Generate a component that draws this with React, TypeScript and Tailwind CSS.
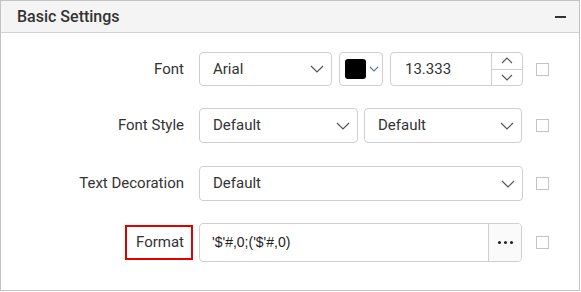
import React from "react";

const Chevron = ({ className = "" }: { className?: string }) => (
  <svg width="14" height="8" viewBox="0 0 14 8" className={className} fill="none">
    <path d="M1 1 L7 7 L13 1" stroke="#555" strokeWidth="1.2" />
  </svg>
);

const Checkbox = () => (
  <div className="w-[13px] h-[13px] border border-[#c4c4c4] bg-white shrink-0" />
);

const Dropdown = ({ value, className = "" }: { value: string; className?: string }) => (
  <div
    className={`flex items-center justify-between border border-[#cfcfcf] rounded-[4px] bg-white pl-[13px] pr-[7px] ${className}`}
  >
    <span className="text-[15px] text-[#333]">{value}</span>
    <Chevron />
  </div>
);

export default function App() {
  return (
    <div
      className="w-[580px] h-[292px] bg-white"
      style={{ fontFamily: "Roboto, 'Liberation Sans', sans-serif" }}
    >
      <div className="w-[580px] h-[291px] border border-[#c2c2c2] flex flex-col">
        <div className="h-[32px] shrink-0 bg-[#f4f4f4] border-b border-[#d2d2d2] flex items-center justify-between pl-[16px] pr-[13px]">
          <span className="text-[16px] font-medium text-[#333] leading-none pt-[1px]">Basic Settings</span>
          <div className="w-[11px] h-[2px] bg-[#333]" />
        </div>

        <div className="flex flex-col pt-[19px]">
          {/* Row 1 */}
          <div className="flex items-center h-[34px]">
            <div className="w-[183px] text-right text-[15px] text-[#333]">Font</div>
            <div className="ml-[15px] flex gap-[7px] h-full">
              <Dropdown value="Arial" className="w-[133px] h-full" />
              <div className="w-[44px] h-full border border-[#cfcfcf] rounded-[4px] flex items-center pl-[5px] gap-[3px]">
                <div className="w-[21px] h-[20px] bg-black rounded-[3px]" />
                <svg width="10" height="6" viewBox="0 0 10 6" fill="none">
                  <path d="M1 1 L5 5 L9 1" stroke="#5a7896" strokeWidth="1.1" />
                </svg>
              </div>
              <div className="w-[133px] h-full border border-[#cfcfcf] rounded-[4px] flex">
                <div className="flex-1 flex items-center pl-[14px] text-[15px] text-[#333]">13.333</div>
                <div className="w-[31px] border-l border-[#cfcfcf] flex flex-col">
                  <div className="flex-1 flex items-center justify-center border-b border-[#cfcfcf]">
                    <svg width="12" height="7" viewBox="0 0 12 7" fill="none">
                      <path d="M1 6 L6 1 L11 6" stroke="#555" strokeWidth="1.1" />
                    </svg>
                  </div>
                  <div className="flex-1 flex items-center justify-center">
                    <svg width="12" height="7" viewBox="0 0 12 7" fill="none">
                      <path d="M1 1 L6 6 L11 1" stroke="#555" strokeWidth="1.1" />
                    </svg>
                  </div>
                </div>
              </div>
            </div>
            <div className="ml-[13px]">
              <Checkbox />
            </div>
          </div>

          {/* Row 2 */}
          <div className="flex items-center h-[35px] mt-[22px]">
            <div className="w-[183px] text-right text-[15px] text-[#333]">Font Style</div>
            <div className="ml-[15px] flex gap-[6px] h-full">
              <Dropdown value="Default" className="w-[159px] h-full" />
              <Dropdown value="Default" className="w-[158px] h-full" />
            </div>
            <div className="ml-[14px]">
              <Checkbox />
            </div>
          </div>

          {/* Row 3 */}
          <div className="flex items-center h-[35px] mt-[23px]">
            <div className="w-[183px] text-right text-[15px] text-[#333]">Text Decoration</div>
            <div className="ml-[15px] flex h-full">
              <Dropdown value="Default" className="w-[324px] h-full" />
            </div>
            <div className="ml-[13px]">
              <Checkbox />
            </div>
          </div>

          {/* Row 4 */}
          <div className="flex items-center h-[39px] mt-[22px]">
            <div className="w-[192px] flex justify-end">
              <div className="w-[68px] h-[35px] border-2 border-[#e00000] flex items-center justify-end pr-[7px] text-[15px] text-[#333]">
                Format
              </div>
            </div>
            <div className="ml-[6px] flex h-full w-[323px] border border-[#cfcfcf] rounded-[4px] overflow-hidden">
              <div className="flex-1 flex items-center pl-[12px] text-[14px] text-[#222]" style={{ fontFamily: "'Liberation Sans', Arial, sans-serif" }}>
                '$'#,0;('$'#,0)
              </div>
              <div className="w-[33px] bg-[#fafafa] border-l border-[#cfcfcf] flex items-center justify-center gap-[3px]">
                <div className="w-[3px] h-[3px] rounded-full bg-[#222]" />
                <div className="w-[3px] h-[3px] rounded-full bg-[#222]" />
                <div className="w-[3px] h-[3px] rounded-full bg-[#222]" />
              </div>
            </div>
            <div className="ml-[14px]">
              <Checkbox />
            </div>
          </div>
        </div>
      </div>
    </div>
  );
}
